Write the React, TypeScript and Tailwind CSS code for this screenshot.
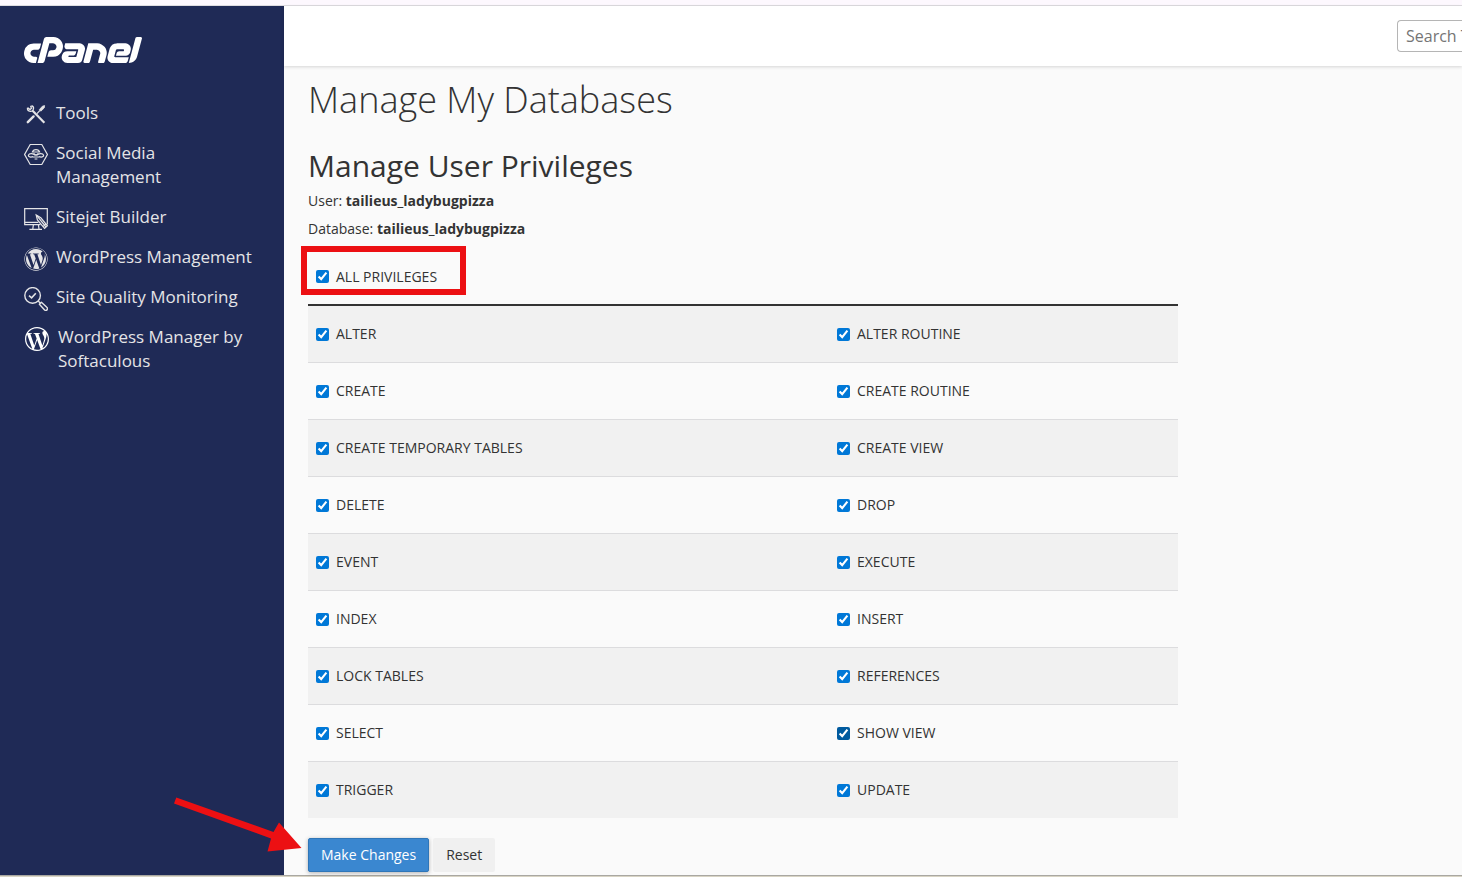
import React from 'react';
import { FaWordpress } from 'react-icons/fa';
import { SiCpanel, SiWordpress } from 'react-icons/si';

interface NavItem {
  label: string;
  icon: React.ReactNode;
  wide?: boolean;
}

function ToolsIcon() {
  return (
    <svg viewBox="0 0 24 24" className="h-6 w-6 shrink-0" fill="none" stroke="currentColor">
      <path d="M8.6 7.8 20.4 19.8" strokeWidth="2.2" />
      <path d="M3.6 4.6A3 3 0 1 0 7.6 2.6M3.8 4.8 6 6.6 7.4 5.2 6.6 2.8" strokeWidth="1.3" />
      <path d="M3.8 19.2 9.6 13.4" strokeWidth="2.4" strokeLinecap="round" />
      <path d="M13 10.6 16 7.4" strokeWidth="1.3" />
      <path d="M15.4 6.6 18.4 3.2 20.6 2.6 20.2 5 16.8 8.2Z" fill="currentColor" strokeWidth="0.8" />
    </svg>
  );
}

function BeeIcon() {
  return (
    <svg viewBox="0 0 24 24" className="h-6 w-6 shrink-0" fill="none" stroke="currentColor" strokeWidth="1.2">
      <path d="M6.2 1.5H17.8L23.4 11.5 17.8 21.5H6.2L.6 11.5Z" />
      <path d="M8.4 9A3.7 3.2 0 0 1 15.6 9Z" />
      <path d="M11.4 12.2C9.4 10.4 5.2 10 4.4 12.2 4.2 14.2 7 14.4 9 13.6" />
      <path d="M12.6 12.2C14.6 10.4 18.8 10 19.6 12.2 19.8 14.2 17 14.4 15 13.6" />
      <path d="M9.6 10.6 12 12.2 14.4 10.6M8.8 14H15.2M10.6 16H13.4" />
    </svg>
  );
}

function SitejetIcon() {
  return (
    <svg viewBox="0 0 24 24" className="h-6 w-6 shrink-0" fill="none" stroke="currentColor" strokeWidth="1.2">
      <path d="M16.4 17.6H.7V1.6H23.3V17.4" />
      <path d="M.7 15.4H14.4M9.4 17.6 8.8 22M14.4 17.6 15 22M5.4 22.4H18" />
      <path d="M12.2 8 13.4 13 20.6 21.4 23.4 18.8 16.8 10.8Z" />
      <path d="M12.4 8.2 22 20M19 19.6 22 17" />
    </svg>
  );
}

function QualityIcon() {
  return (
    <svg viewBox="0 0 24 24" className="h-6 w-6 shrink-0" fill="none" stroke="currentColor" strokeWidth="1.4">
      <circle cx="8.6" cy="8.4" r="7.8" />
      <path d="M5 8.6 7.6 10.8 11.8 6.2" strokeWidth="1.6" />
      <path d="M14 13.8 16.4 16.2" />
      <path d="M15.4 17.2 17.4 15.2 22.8 20.2A1.6 1.6 0 0 1 20.6 23Z" strokeLinejoin="round" />
    </svg>
  );
}

const navItems: NavItem[] = [
  { label: 'Tools', icon: <ToolsIcon /> },
  { label: 'Social Media Management', icon: <BeeIcon /> },
  { label: 'Sitejet Builder', icon: <SitejetIcon /> },
  { label: 'WordPress Management', icon: <FaWordpress className="h-6 w-6 shrink-0" /> },
  { label: 'Site Quality Monitoring', icon: <QualityIcon /> },
  {
    label: 'WordPress Manager by Softaculous',
    icon: <SiWordpress className="h-6 w-6 shrink-0 text-white" />,
    wide: true,
  },
];

const privilegeRows = [
  ['ALTER', 'ALTER ROUTINE'],
  ['CREATE', 'CREATE ROUTINE'],
  ['CREATE TEMPORARY TABLES', 'CREATE VIEW'],
  ['DELETE', 'DROP'],
  ['EVENT', 'EXECUTE'],
  ['INDEX', 'INSERT'],
  ['LOCK TABLES', 'REFERENCES'],
  ['SELECT', 'SHOW VIEW'],
  ['TRIGGER', 'UPDATE'],
];

function Privilege({ name, active = false }: { name: string; active?: boolean }) {
  return (
    <label className="inline-flex items-center gap-[7px] align-middle font-normal">
      <input
        type="checkbox"
        defaultChecked
        className={`h-[13px] w-[13px] ${active ? 'accent-[#005a9e]' : 'accent-[#0078d7]'}`}
      />
      {name}
    </label>
  );
}

function Sidebar() {
  return (
    <aside className="w-[284px] shrink-0 bg-[#1f2a56] px-6 pt-[29px] text-[#e4e4e6]">
      <a href="#home" aria-label="cPanel" className="block text-white">
        <SiCpanel viewBox="0 9 24 6" className="h-[30px] w-[118px]" />
      </a>
      <nav className="mt-7">
        {navItems.map((item) => (
          <a key={item.label} href="#nav" className="flex items-start gap-2 py-2 text-[17px] leading-6">
            <span
              className={`mt-0.5 flex h-[22px] shrink-0 items-start justify-center ${item.wide ? 'w-[26px]' : 'w-6'}`}
            >
              {item.icon}
            </span>
            <span>{item.label}</span>
          </a>
        ))}
      </nav>
    </aside>
  );
}

export default function App() {
  return (
    <div className="flex min-h-screen flex-col overflow-x-hidden bg-[#fafafa] font-['Open_Sans',sans-serif] text-sm text-[#333]">
      <div className="h-1.5 border-b border-[#dedce0] bg-[#fdf8fe]" />
      <div className="flex grow">
        <Sidebar />
        <div className="min-w-0 grow">
          <header className="flex h-[60px] items-center justify-end bg-white shadow-[0_1px_3px_rgba(0,0,0,0.15)]">
            <input
              type="text"
              aria-label="Search Tools"
              placeholder="Search Tools (/)"
              className="h-8 w-[65px] rounded-l border border-r-0 border-[#b5b5b5] bg-white pl-2 text-base placeholder:text-[#757575]"
            />
          </header>

          <main className="px-6 pt-[14px] pb-[3px]">
            <h1 className="text-4xl leading-10 font-light">Manage My Databases</h1>
            <h2 className="mt-[21px] text-[30px] leading-[50px] font-medium">Manage User Privileges</h2>
            <p className="leading-5">
              User: <b>tailieus_ladybugpizza</b>
            </p>
            <p className="mt-2 leading-5">
              Database: <b>tailieus_ladybugpizza</b>
            </p>

            <table className="mt-[9px] w-full max-w-[870px] table-fixed border-collapse text-left">
              <colgroup>
                <col className="w-[60%]" />
                <col />
              </colgroup>
              <thead>
                <tr className="h-[57px] border-b-2 border-[#333]">
                  <th colSpan={2} className="relative px-2">
                    <Privilege name="ALL PRIVILEGES" />
                    {/* highlight frame */}
                    <span className="pointer-events-none absolute top-[-2px] left-[-7px] h-[49px] w-[165px] border-[6px] border-[#ec1013]" />
                  </th>
                </tr>
              </thead>
              <tbody>
                {privilegeRows.map(([left, right]) => (
                  <tr key={left} className="h-[57px] border-b border-[#dcdcde] odd:bg-[#f1f1f1] last:border-b-0">
                    <td className="px-2">
                      <Privilege name={left} />
                    </td>
                    <td className="px-[7px]">
                      <Privilege name={right} active={right === 'SHOW VIEW'} />
                    </td>
                  </tr>
                ))}
              </tbody>
            </table>

            <div className="relative mt-5 flex gap-1">
              <button
                type="button"
                className="h-[34px] rounded-xs border border-[#2f76b8] bg-[#3a87d0] px-3 text-white shadow-[0_1px_4px_rgba(0,0,0,0.3)]"
              >
                Make Changes
              </button>
              <button type="button" className="h-[34px] rounded-xs bg-[#f0f0f0] px-[13px]">
                Reset
              </button>
              <svg
                viewBox="0 0 130 60"
                className="pointer-events-none absolute bottom-[18px] left-[-136px] h-[60px] w-[130px]"
                fill="#ec1013"
              >
                <path d="M4.3 3.5 101.5 38 107 28.5 129.5 54 95.5 57.5 99 44.5 2 9.5Z" />
              </svg>
            </div>
          </main>
        </div>
      </div>
      <div className="h-0.5 border-t border-[#a9a7a2] bg-[#d8d4c4]" />
    </div>
  );
}
